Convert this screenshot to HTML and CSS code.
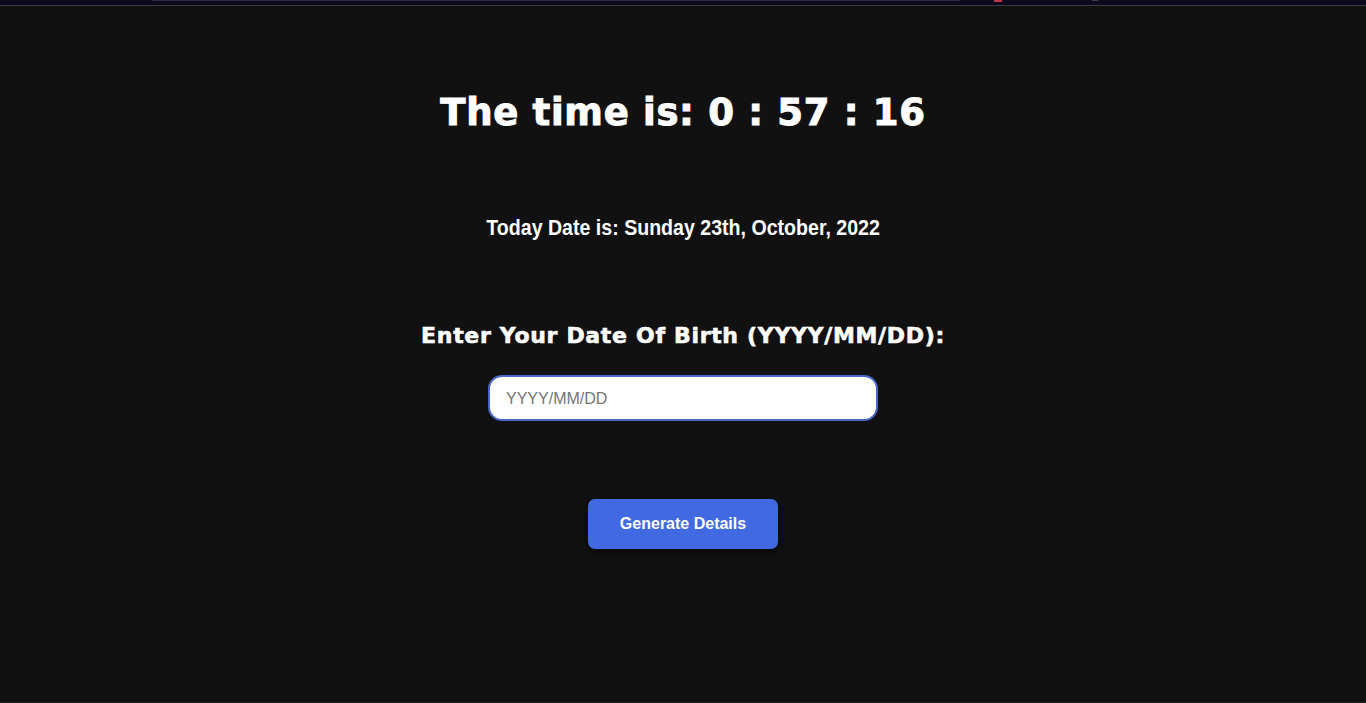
FILE: index.html
```html
<!DOCTYPE html>
<html lang="en">
<head>
<meta charset="utf-8">
<title>Age Calculator</title>
<link rel="stylesheet" href="styles.css">
</head>
<body>
<div class="topbar">
  <div class="topbar-track"></div>
  <div class="topbar-dot red"></div>
  <div class="topbar-dot gray"></div>
</div>
<main class="page">
  <h1 class="clock">The time is: 0 : 57 : 16</h1>
  <p class="today">Today Date is: Sunday 23th, October, 2022</p>
  <h2 class="label">Enter Your Date Of Birth (YYYY/MM/DD):</h2>
  <input class="dob" type="text" placeholder="YYYY/MM/DD">
  <button class="generate" type="button">Generate Details</button>
</main>
<div class="bottomline"></div>
</body>
</html>
```

FILE: styles.css
```css
html, body {
  margin: 0;
  padding: 0;
  background: #111111;
  height: 100%;
}
body {
  display: flex;
  flex-direction: column;
  overflow: hidden;
}
.topbar {
  height: 5px;
  background: #0c0a1d;
  border-bottom: 1px solid #3b3b42;
  display: flex;
  align-items: flex-start;
  flex-shrink: 0;
}
.topbar-track {
  margin-left: 152px;
  width: 808px;
  height: 1px;
  background: #2a2940;
}
.topbar-dot {
  height: 2px;
  width: 8px;
}
.topbar-dot.red {
  margin-left: 34px;
  background: #c0394a;
}
.topbar-dot.gray {
  margin-left: 90px;
  width: 6px;
  height: 1px;
  background: #3d3d4a;
}
.page {
  flex: 1;
  display: flex;
  flex-direction: column;
  align-items: center;
  color: #ffffff;
}
.clock {
  margin: 85px 0 0;
  font-family: "DejaVu Sans", sans-serif;
  font-weight: 700;
  font-size: 37px;
  line-height: 44px;
  letter-spacing: 0.7px;
  -webkit-text-stroke: 1px #ffffff;
}
.today {
  margin: 79px 0 0;
  display: inline-block;
  font-family: "Liberation Sans", Arial, sans-serif;
  font-weight: 700;
  font-size: 22px;
  line-height: 28px;
  transform: scaleX(0.89);
}
.label {
  margin: 80px 0 0;
  font-family: "DejaVu Sans", sans-serif;
  font-weight: 700;
  font-size: 22px;
  line-height: 28px;
  letter-spacing: 0.68px;
  -webkit-text-stroke: 0.6px #ffffff;
}
.dob {
  margin-top: 25px;
  box-sizing: border-box;
  width: 390px;
  height: 46px;
  border: 2px solid #4a67c9;
  border-radius: 14px;
  background: #ffffff;
  padding: 1px 16px 0;
  font-family: "Liberation Sans", Arial, sans-serif;
  font-size: 16px;
  color: #222;
  outline: none;
}
.dob::placeholder {
  color: #757575;
}
.generate {
  margin-top: 78px;
  width: 190px;
  height: 50px;
  border: none;
  border-radius: 7px;
  background: #4169e1;
  color: #ffffff;
  font-family: "Liberation Sans", Arial, sans-serif;
  font-weight: 700;
  font-size: 16px;
  box-shadow: 0 3px 8px rgba(0, 0, 0, 0.6);
  cursor: pointer;
}
.bottomline {
  height: 1px;
  background: #232323;
  flex-shrink: 0;
}
```
